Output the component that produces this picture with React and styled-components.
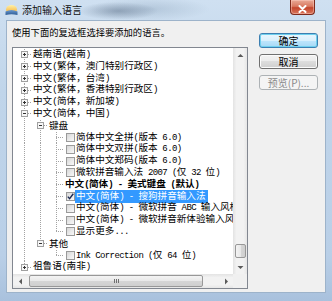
import React from 'react';
import styled, { createGlobalStyle } from 'styled-components';

const GlobalStyle = createGlobalStyle`
  html, body {
    margin: 0;
    padding: 0;
    background: #fff;
  }
  body {
    width: 332px;
    height: 301px;
    overflow: hidden;
    font-family: "Noto Sans CJK SC", sans-serif;
  }
`;

const CJK = '"Noto Sans CJK SC", "Noto Sans", sans-serif';
const LINE = '#a3a3a3';
const dotsV = `repeating-linear-gradient(to bottom, ${LINE} 0 1px, transparent 1px 2px)`;
const dotsH = `repeating-linear-gradient(to right, ${LINE} 0 1px, transparent 1px 2px)`;

// tree data: level, expander (+/-), checkbox, guides for ancestor levels, last child
const rows = [
  { level: 0, exp: '+', text: '越南语(越南)' },
  { level: 0, exp: '+', text: '中文(繁体，澳门特别行政区)' },
  { level: 0, exp: '+', text: '中文(繁体，台湾)' },
  { level: 0, exp: '+', text: '中文(繁体，香港特别行政区)' },
  { level: 0, exp: '+', text: '中文(简体，新加坡)' },
  { level: 0, exp: '-', text: '中文(简体，中国)' },
  { level: 1, exp: '-', guides: [true], text: '键盘' },
  { level: 2, check: 'off', guides: [true, true], text: '简体中文全拼(版本 6.0)' },
  { level: 2, check: 'off', guides: [true, true], text: '简体中文双拼(版本 6.0)' },
  { level: 2, check: 'off', guides: [true, true], text: '简体中文郑码(版本 6.0)' },
  { level: 2, check: 'off', guides: [true, true], text: '微软拼音输入法 2007 (仅 32 位)' },
  { level: 2, bold: true, guides: [true, true], text: '中文(简体) - 美式键盘 (默认)' },
  { level: 2, check: 'on', selected: true, guides: [true, true], text: '中文(简体) - 搜狗拼音输入法' },
  { level: 2, check: 'off', guides: [true, true], text: '中文(简体) - 微软拼音 ABC 输入风格' },
  { level: 2, check: 'off', guides: [true, true], text: '中文(简体) - 微软拼音新体验输入风格' },
  { level: 2, check: 'off', guides: [true, true], last: true, text: '显示更多...' },
  { level: 1, exp: '-', guides: [true], last: true, text: '其他' },
  { level: 2, check: 'off', guides: [true, false], last: true, text: 'Ink Correction (仅 64 位)' },
  { level: 0, exp: '+', last: true, text: '祖鲁语(南非)' },
];

// half-width latin runs get a narrow mono face, like the system font does
const splitText = (text) =>
  text.split(/([\u0000-\u00ff]+)/).filter(Boolean).map((part, i) =>
    /^[\u0000-\u00ff]+$/.test(part) ? <Half key={i}>{part}</Half> : <React.Fragment key={i}>{part}</React.Fragment>
  );

const TitleIcon = () => (
  <svg width="13" height="13" viewBox="0 0 13 13">
    <defs>
      <linearGradient id="sun" x1="0" y1="0" x2="0" y2="1">
        <stop offset="0" stopColor="#fff1a8" />
        <stop offset="1" stopColor="#f2a72a" />
      </linearGradient>
      <linearGradient id="sea" x1="0" y1="0" x2="0" y2="1">
        <stop offset="0" stopColor="#6e9bd0" />
        <stop offset="1" stopColor="#2c5a93" />
      </linearGradient>
    </defs>
    <ellipse cx="6.5" cy="6.5" rx="5.5" ry="4.5" fill="url(#sun)" />
    <path d="M0.5 8.5 Q6.5 5.5 12.5 8.5 L12.5 12 Q6.5 10.5 0.5 12 Z" fill="url(#sea)" />
  </svg>
);

const Expander = ({ open }) => (
  <svg width="7" height="7" viewBox="0 0 7 7">
    <rect x="0.5" y="0.5" width="6" height="6" fill="#f7f7f7" stroke="#a0a0a0" />
    <path d="M2 3.5 H5" stroke="#333" />
    {!open && <path d="M3.5 2 V5" stroke="#333" />}
  </svg>
);

const Arrow = ({ dir }) => {
  const d = {
    up: 'M0.5 4 L3.5 1 L6.5 4 Z',
    down: 'M0.5 1 L3.5 4 L6.5 1 Z',
    left: 'M4 0.5 L1 3.5 L4 6.5 Z',
    right: 'M1 0.5 L4 3.5 L1 6.5 Z',
  }[dir];
  const vertical = dir === 'up' || dir === 'down';
  return (
    <svg width={vertical ? 7 : 5} height={vertical ? 5 : 7} viewBox={vertical ? '0 0 7 5' : '0 0 5 7'}>
      <path d={d} fill="#5a5a5a" />
    </svg>
  );
};

function guideBg(kind) {
  if (kind === 'pass') return { img: dotsV, size: '1px 100%', pos: '8px 0' };
  if (kind === 'tee') return { img: `${dotsV}, ${dotsH}`, size: '1px 100%, 8px 1px', pos: '8px 0, 8px 50%' };
  if (kind === 'elbow') return { img: `${dotsV}, ${dotsH}`, size: '1px 50%, 8px 1px', pos: '8px 0, 8px 50%' };
  return { img: 'none', size: 'auto', pos: '0 0' };
}

const TreeNode = ({ row }) => {
  const guides = row.guides || [];
  return (
    <Row>
      {guides.map((g, i) => (
        <Guide key={i} $kind={g ? 'pass' : 'none'} />
      ))}
      <Guide $kind={row.last ? 'elbow' : 'tee'}>
        {row.exp && <Expander open={row.exp === '-'} />}
      </Guide>
      {row.check && (
        <Check>
          {row.check === 'on' && (
            <svg width="7" height="7" viewBox="0 0 7 7">
              <path d="M0.8 3.6 L2.6 5.6 L6.3 0.8" fill="none" stroke="#1c2a52" strokeWidth="1.4" />
            </svg>
          )}
        </Check>
      )}
      <Label $selected={row.selected} $bold={row.bold}>{splitText(row.text)}</Label>
    </Row>
  );
};

const App = () => {
  return (
    <>
      <GlobalStyle />
      <Window>
        <TitleBar>
          <TitleIcon />
          <TitleText>添加输入语言</TitleText>
          <CloseButton>
            <svg width="9" height="8" viewBox="0 0 9 8">
              <path d="M1.5 1 L7.5 7 M7.5 1 L1.5 7" stroke="#fff" strokeWidth="2" strokeLinecap="round" />
            </svg>
          </CloseButton>
        </TitleBar>
        <Client>
          <MainColumn>
            <Prompt>使用下面的复选框选择要添加的语言。</Prompt>
            <TreeBox>
              <TreeArea>
                {rows.map((r, i) => (
                  <TreeNode key={i} row={r} />
                ))}
              </TreeArea>
              <VScroll>
                <ScrollButton><Arrow dir="up" /></ScrollButton>
                <VTrack>
                  <VThumb />
                </VTrack>
                <ScrollButton><Arrow dir="down" /></ScrollButton>
              </VScroll>
              <HScroll>
                <ScrollButton><Arrow dir="left" /></ScrollButton>
                <HTrack>
                  <HThumb>
                    <Grip />
                  </HThumb>
                </HTrack>
                <ScrollButton><Arrow dir="right" /></ScrollButton>
              </HScroll>
              <Corner />
            </TreeBox>
          </MainColumn>
          <ButtonColumn>
            <Button $default>确定</Button>
            <Button>取消</Button>
            <Button disabled>预览(P)...</Button>
          </ButtonColumn>
        </Client>
      </Window>
    </>
  );
};

const Window = styled.div`
  width: 332px;
  height: 301px;
  box-sizing: border-box;
  display: flex;
  flex-direction: column;
  background: linear-gradient(180deg, #cfe0f1 0%, #c0d5ea 30%, #b9cfe7 85%, #a9c1dd 100%);
`;

const TitleBar = styled.div`
  height: 20px;
  flex: none;
  display: flex;
  align-items: flex-start;
  padding-left: 5px;
  background:
    radial-gradient(ellipse 40px 9px at 118px 11px, rgba(80, 100, 125, 0.45), rgba(80, 100, 125, 0) 100%),
    radial-gradient(ellipse 60px 12px at 150px 9px, rgba(120, 145, 170, 0.3), rgba(120, 145, 170, 0) 100%);

  svg:first-child {
    margin-top: 3px;
  }
`;

const TitleText = styled.span`
  margin-left: 4px;
  margin-top: 3px;
  font: 10px/13px ${CJK};
  color: #111;
`;

const CloseButton = styled.div`
  margin-left: auto;
  margin-right: 17px;
  width: 25px;
  height: 15px;
  box-sizing: border-box;
  border: 1px solid #7d2a1c;
  border-top: none;
  border-radius: 0 0 4px 4px;
  display: flex;
  align-items: center;
  justify-content: center;
  background: linear-gradient(180deg, #e9a996 0%, #d97a62 45%, #c4452c 55%, #d8765c 100%);
  box-shadow: inset 0 0 0 1px rgba(255, 210, 200, 0.45);
`;

const Client = styled.div`
  flex: 1;
  margin: 0 6px 8px 6px;
  box-sizing: border-box;
  border: 1px solid #9db3ca;
  background: #f0f0f0;
  display: grid;
  grid-template-columns: 236px 59px;
  column-gap: 11px;
  padding: 5px 7px 3px 5px;
`;

const MainColumn = styled.div`
  display: flex;
  flex-direction: column;
  min-height: 0;
`;

const Prompt = styled.div`
  font: 9.3px/12px ${CJK};
  color: #000;
  margin-bottom: 9px;
  white-space: nowrap;
`;

const TreeBox = styled.div`
  flex: 1;
  min-height: 0;
  border: 1px solid #828790;
  background: #fff;
  display: grid;
  grid-template-columns: 1fr 14px;
  grid-template-rows: 1fr 14px;
  overflow: hidden;
`;

const TreeArea = styled.div`
  overflow: hidden;
  padding: 1px 0 0 3px;
  min-width: 0;
`;

const Row = styled.div`
  height: 11.8px;
  display: flex;
  align-items: center;
  white-space: nowrap;
`;

const Guide = styled.span`
  flex: none;
  width: 16px;
  align-self: stretch;
  display: flex;
  align-items: center;
  justify-content: center;
  padding-left: 1px;
  box-sizing: border-box;
  background-image: ${(p) => guideBg(p.$kind).img};
  background-size: ${(p) => guideBg(p.$kind).size};
  background-position: ${(p) => guideBg(p.$kind).pos};
  background-repeat: no-repeat;
`;

const Check = styled.span`
  flex: none;
  width: 9px;
  height: 9px;
  margin-left: 2px;
  box-sizing: border-box;
  border: 1px solid #9a9a9a;
  background: linear-gradient(135deg, #d6d6d6 0%, #ececec 60%, #f8f8f8 100%);
  display: flex;
  align-items: center;
  justify-content: center;
`;

const Label = styled.span`
  font: ${(p) => (p.$bold ? 700 : 400)} 9.6px/11.8px ${CJK};
  padding: 0 2px 0 1px;
  color: ${(p) => (p.$selected ? '#fff' : '#000')};
  background: ${(p) => (p.$selected ? '#3399ff' : 'transparent')};
`;

const Half = styled.span`
  font-family: "Liberation Mono", monospace;
  font-size: 9px;
  letter-spacing: -0.6px;
`;

const VScroll = styled.div`
  display: flex;
  flex-direction: column;
  background: linear-gradient(90deg, #e3e3e3 0%, #f2f2f2 25%, #f2f2f2 75%, #e6e6e6 100%);
`;

const HScroll = styled.div`
  display: flex;
  background: linear-gradient(180deg, #e3e3e3 0%, #f2f2f2 25%, #f2f2f2 75%, #e6e6e6 100%);
`;

const Corner = styled.div`
  background: #f0f0f0;
`;

const ScrollButton = styled.div`
  flex: none;
  width: 14px;
  height: 14px;
  display: flex;
  align-items: center;
  justify-content: center;
`;

const VTrack = styled.div`
  flex: 1;
  display: flex;
  flex-direction: column;
  justify-content: flex-end;
  align-items: center;
  padding-bottom: 2px;
`;

const VThumb = styled.div`
  width: 11px;
  height: 14px;
  box-sizing: border-box;
  border: 1px solid #989898;
  border-radius: 2px;
  background: linear-gradient(90deg, #f4f4f4 0%, #e8e8e8 50%, #d6d6d6 51%, #cfcfcf 100%);
`;

const HTrack = styled.div`
  flex: 1;
  display: flex;
  align-items: center;
  padding-left: 2px;
`;

const HThumb = styled.div`
  width: 174px;
  height: 12px;
  box-sizing: border-box;
  border: 1px solid #989898;
  border-radius: 2px;
  background: linear-gradient(180deg, #f4f4f4 0%, #e8e8e8 50%, #d6d6d6 51%, #cfcfcf 100%);
  display: flex;
  align-items: center;
  justify-content: center;
`;

const Grip = styled.span`
  width: 5px;
  height: 4px;
  background: repeating-linear-gradient(90deg, #6f6f6f 0 1px, transparent 1px 2px);
`;

const ButtonColumn = styled.div`
  display: flex;
  flex-direction: column;
  gap: 6px;
  padding-top: 7px;
`;

const Button = styled.button`
  height: 15px;
  width: 100%;
  box-sizing: border-box;
  padding: 0;
  font: 10px/13px ${CJK};
  color: ${(p) => (p.disabled ? '#8a8a8a' : '#000')};
  border: 1px solid ${(p) => (p.$default ? '#3c7fb1' : p.disabled ? '#adb2b5' : '#707070')};
  border-radius: 3px;
  background: ${(p) =>
    p.disabled
      ? '#f4f4f4'
      : p.$default
      ? 'linear-gradient(180deg, #eaf6fd 0%, #d9f0fc 50%, #bee6fd 50%, #a7d9f5 100%)'
      : 'linear-gradient(180deg, #f2f2f2 0%, #ebebeb 50%, #dddddd 50%, #cfcfcf 100%)'};
  box-shadow: ${(p) => (p.$default ? 'inset 0 0 0 1px #6fd0ee' : p.disabled ? 'none' : 'inset 0 0 0 1px #fbfbfb')};
`;

export default App;
